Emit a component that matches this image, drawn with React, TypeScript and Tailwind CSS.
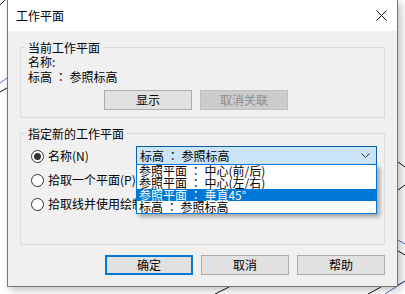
import * as React from 'react'

const font = { fontFamily: '"Noto Sans CJK SC", "Liberation Sans", sans-serif' }

const items = [
  '参照平面 ： 中心(前/后)',
  '参照平面 ： 中心(左/右)',
  '参照平面 ： 垂直45°',
  '标高 ： 参照标高',
]

// full-width colon centred as in the Windows font
const Txt: React.FC<{ text: string }> = ({ text }) => {
  const parts = text.split('：')
  return (
    <>
      {parts.map((p, i) => (
        <React.Fragment key={i}>
          {i > 0 && <span className="font-['Noto_Sans_CJK_JP']">：</span>}
          {p}
        </React.Fragment>
      ))}
    </>
  )
}

const Radio: React.FC<{ checked?: boolean; label: string }> = ({ checked, label }) => (
  <div className="flex items-center gap-[4px] whitespace-nowrap">
    <span className="flex h-[13px] w-[13px] items-center justify-center rounded-full border border-[#333] bg-white">
      {checked && <span className="h-[7px] w-[7px] rounded-full bg-[#333]" />}
    </span>
    <span>{label}</span>
  </div>
)

const Button: React.FC<{ label: string; primary?: boolean; disabled?: boolean }> = ({
  label,
  primary,
  disabled,
}) => (
  <button
    className={`flex h-[20px] w-[88px] items-center justify-center text-[12px] leading-none ${
      primary
        ? 'border-2 border-[#0078d7] bg-[#e1e1e1] text-black'
        : disabled
          ? 'border border-[#bfbfbf] bg-[#cccccc] text-[#8d8d8d]'
          : 'border border-[#adadad] bg-[#e1e1e1] text-black'
    }`}
    type="button"
  >
    {label}
  </button>
)

export default function App() {
  return (
    <div className="relative h-[294px] w-[405px] overflow-hidden bg-white text-[12px] text-black" style={font}>
      <svg className="absolute inset-0" width="405" height="294">
        <g stroke="#111" strokeWidth="1" fill="none">
          <line x1="0" y1="5" x2="5" y2="0" />
          <line x1="0" y1="92" x2="7" y2="88" />
          <line x1="398" y1="162" x2="405" y2="167" />
          <line x1="398" y1="190" x2="405" y2="185" />
          <line x1="398" y1="251" x2="405" y2="255" />
          <line x1="398" y1="285" x2="405" y2="281" />
          <line x1="215" y1="294" x2="229" y2="287" />
          <line x1="368" y1="294" x2="381" y2="287" />
        </g>
        <g stroke="#4a74d0" strokeWidth="1" fill="none">
          <line x1="0" y1="83" x2="7" y2="78" />
          <line x1="398" y1="240" x2="405" y2="244" />
          <line x1="385" y1="294" x2="405" y2="281" />
        </g>
      </svg>

      <div className="relative ml-[7px] flex h-[287px] w-[391px] flex-col border border-t-0 border-[#777] bg-[#f0f0f0] shadow-[3px_3px_8px_rgba(0,0,0,0.25)]">
        <div className="flex h-[31px] items-center justify-between bg-white pl-[8px] pr-[10px]">
          <span className="text-[12px]">工作平面</span>
          <svg width="11" height="11" viewBox="0 0 11 11">
            <path d="M0.5 0.5 L10.5 10.5 M10.5 0.5 L0.5 10.5" stroke="#111" strokeWidth="1" />
          </svg>
        </div>

        <div className="flex flex-col px-[12px] pt-[16px]">
          <div className="flex h-[71px] flex-col border border-[#dcdcdc] leading-[14px]">
            <span className="-mt-[7px] ml-[4px] w-fit bg-[#f0f0f0] px-[3px]">当前工作平面</span>
            <span className="ml-[7px] leading-[14px]">名称:</span>
            <span className="ml-[7px] whitespace-pre leading-[15px]">
              <Txt text="标高 ： 参照标高" />
            </span>
            <div className="ml-[83px] mt-[6px] flex gap-[8px]">
              <Button label="显示" />
              <Button label="取消关联" disabled />
            </div>
          </div>

          <div className="relative mt-[15px] flex h-[112px] flex-col border border-[#dcdcdc] leading-[14px]">
            <span className="-mt-[7px] ml-[4px] w-fit bg-[#f0f0f0] px-[3px]">指定新的工作平面</span>
            <div className="mt-[3px] flex h-[24px] items-center pl-[10px]">
              <div className="w-[105px]">
                <Radio checked label="名称(N)" />
              </div>
              <div className="flex h-[20px] w-[241px] items-center justify-between border border-[#0b5ea8] bg-[#cce4f7] pl-[3px] pr-[6px]">
                <span className="whitespace-pre">
                  <Txt text="标高 ： 参照标高" />
                </span>
                <svg width="9" height="6" viewBox="0 0 9 6">
                  <path d="M0.5 0.5 L4.5 4.5 L8.5 0.5" stroke="#333" strokeWidth="1" fill="none" />
                </svg>
              </div>
            </div>
            <div className="flex h-[24px] items-center pl-[10px]">
              <Radio label="拾取一个平面(P)" />
            </div>
            <div className="flex h-[24px] items-center pl-[10px]">
              <Radio label="拾取线并使用绘制该线的工作平面(L)" />
            </div>

            <div className="absolute left-[115px] top-[30px] flex w-[241px] flex-col border border-[#0078d7] bg-white shadow-[3px_3px_4px_rgba(0,0,0,0.3)]">
              {items.map((t, i) => (
                <div
                  key={t}
                  className={`h-[12px] overflow-visible whitespace-pre pl-[2px] leading-[12px] ${
                    i === 2 ? 'bg-[#0078d7] text-white' : 'text-black'
                  }`}
                >
                  <Txt text={t} />
                </div>
              ))}
            </div>
          </div>

          <div className="ml-[85px] mt-[10px] flex gap-[8px]">
            <Button label="确定" primary />
            <Button label="取消" />
            <Button label="帮助" />
          </div>
        </div>
      </div>
    </div>
  )
}
